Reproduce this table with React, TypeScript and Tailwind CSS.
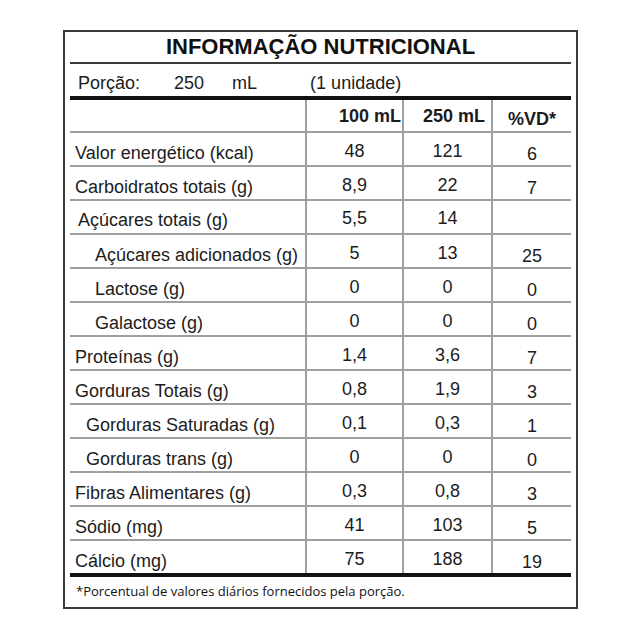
import React from "react";

type Row = { label: string; indent: 0 | 1 | 2 | 3; a: string; b: string; vd: string };

const rows: Row[] = [
  { label: "Valor energético (kcal)", indent: 0, a: "48", b: "121", vd: "6" },
  { label: "Carboidratos totais (g)", indent: 0, a: "8,9", b: "22", vd: "7" },
  { label: "Açúcares totais (g)", indent: 1, a: "5,5", b: "14", vd: "" },
  { label: "Açúcares adicionados (g)", indent: 3, a: "5", b: "13", vd: "25" },
  { label: "Lactose (g)", indent: 3, a: "0", b: "0", vd: "0" },
  { label: "Galactose (g)", indent: 3, a: "0", b: "0", vd: "0" },
  { label: "Proteínas (g)", indent: 0, a: "1,4", b: "3,6", vd: "7" },
  { label: "Gorduras Totais (g)", indent: 0, a: "0,8", b: "1,9", vd: "3" },
  { label: "Gorduras Saturadas (g)", indent: 2, a: "0,1", b: "0,3", vd: "1" },
  { label: "Gorduras trans (g)", indent: 2, a: "0", b: "0", vd: "0" },
  { label: "Fibras Alimentares (g)", indent: 0, a: "0,3", b: "0,8", vd: "3" },
  { label: "Sódio (mg)", indent: 0, a: "41", b: "103", vd: "5" },
  { label: "Cálcio (mg)", indent: 0, a: "75", b: "188", vd: "19" },
];

const indentClass = (i: number) =>
  i === 0 ? "pl-[5px]" : i === 1 ? "pl-[8px]" : i === 2 ? "pl-[16px]" : "pl-[25px]";

export default function App() {
  return (
    <div
      className="w-[640px] h-[640px] bg-white pt-[30px] pl-[63px] text-[#1c1c1c]"
      style={{ fontFamily: '"Liberation Sans", Arial, sans-serif' }}
    >
      <div className="w-[515px] h-[579px] border-2 border-[#3a3a3a] px-[5px] flex flex-col">
        {/* Title */}
        <div className="h-[32px] border-b-2 border-[#3a3a3a] flex items-center justify-center text-[22px] font-bold text-[#111] pb-[1px]">
          INFORMAÇÃO NUTRICIONAL
        </div>
        {/* Porção */}
        <div className="h-[32px] flex items-center pt-[6px] pl-[8px] text-[18px] whitespace-nowrap">
          <span>Porção:</span>
          <span className="ml-[34px]">250</span>
          <span className="ml-[28px]">mL</span>
          <span className="ml-[53px]">(1 unidade)</span>
        </div>
        <div className="h-[4px] bg-[#111]" />
        {/* Header */}
        <div className="grid grid-cols-[235px_97px_89px_80px] h-[33px] border-b-2 border-[#a0a0a0] text-[18px] font-bold">
          <div />
          <div className="border-l-2 border-[#a0a0a0] flex items-center justify-end pr-[1px]">100 mL</div>
          <div className="border-l-2 border-[#a0a0a0] flex items-center justify-end pr-[6px]">250 mL</div>
          <div className="border-l-2 border-[#a0a0a0] flex items-center justify-center pt-[6px]">%VD*</div>
        </div>
        {rows.map((r, idx) => {
          const last = idx === rows.length - 1;
          return (
            <div
              key={r.label}
              className={
                "grid grid-cols-[235px_97px_89px_80px] text-[18px] " +
                (last ? "h-[32px]" : "h-[34px] border-b-2 border-[#a0a0a0]")
              }
            >
              <div className={"flex items-center pt-[6px] whitespace-nowrap " + indentClass(r.indent)}>
                {r.label}
              </div>
              <div className="border-l-2 border-[#a0a0a0] flex items-center justify-center pt-[2px]">{r.a}</div>
              <div className="border-l-2 border-[#a0a0a0] flex items-center justify-center pt-[2px]">{r.b}</div>
              <div className="border-l-2 border-[#a0a0a0] flex items-center justify-center pt-[8px]">{r.vd}</div>
            </div>
          );
        })}
        <div className="h-[4px] bg-[#111]" />
        {/* Footnote */}
        <div
          className="flex-1 flex items-center pl-[6px] text-[13px] font-medium text-[#111] whitespace-nowrap"
          style={{ fontFamily: '"Open Sans", "Noto Sans", sans-serif' }}
        >
          *Porcentual de valores diários fornecidos pela porção.
        </div>
      </div>
    </div>
  );
}
